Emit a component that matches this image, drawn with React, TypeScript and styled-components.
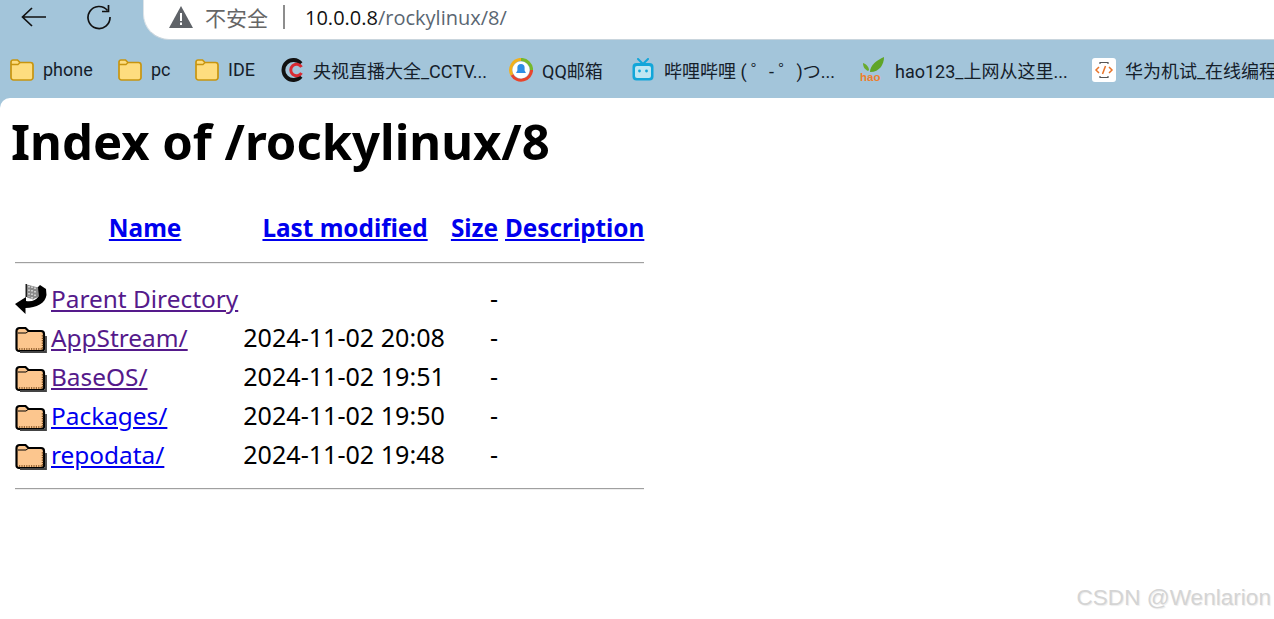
import React from 'react';
import styled, { createGlobalStyle } from 'styled-components';

const GlobalStyle = createGlobalStyle`
  html, body {
    margin: 0;
    padding: 0;
    background: #a3c5da;
    overflow: hidden;
  }
`;

const FolderYellow = () => (
  <svg width="24" height="22" viewBox="0 0 24 22">
    <path d="M1 5V3a2 2 0 0 1 2-2h4.500l2.500 2.500h10.500A2.500 2.500 0 0 1 23 6v12.500a2.500 2.500 0 0 1-2.500 2.500h-17A2.500 2.500 0 0 1 1 18.500z" fill="#fedd7f" stroke="#c8950f" strokeWidth="1.700" />
    <path d="M1 5.500h7l2-2" fill="none" stroke="#c8950f" strokeWidth="1.300" />
  </svg>
);

const CctvIcon = () => (
  <svg width="24" height="24" viewBox="0 0 24 24" fill="none">
    <path d="M21 5.500A10 10 0 1 0 21 18.500" stroke="#111" strokeWidth="3.800" />
    <path d="M21.500 9A5.800 5.800 0 1 0 21.500 15" stroke="#d92a32" strokeWidth="3" />
  </svg>
);

const QQMailIcon = () => (
  <svg width="24" height="24" viewBox="0 0 24 24">
    <path d="M3 17A10.500 10.500 0 0 1 12 1.500" fill="none" stroke="#f2b01e" strokeWidth="3.200" />
    <path d="M12 1.500A10.500 10.500 0 0 1 22.500 12" fill="none" stroke="#76b82a" strokeWidth="3.200" />
    <path d="M22.500 12A10.500 10.500 0 0 1 3 17" fill="none" stroke="#e8452c" strokeWidth="3.200" />
    <circle cx="12" cy="12" r="8.500" fill="#fff" />
    <path d="M12 6a3.600 3.600 0 0 1 3.600 3.600v3l1.400 2.400H7l1.400-2.400v-3A3.600 3.600 0 0 1 12 6z" fill="#2f8fe6" />
  </svg>
);

const BilibiliIcon = () => (
  <svg width="24" height="24" viewBox="0 0 24 24">
    <path d="M7 1l4 4M17 1l-4 4" stroke="#12a6d9" strokeWidth="2" strokeLinecap="round" />
    <rect x="1.500" y="5" width="21" height="17.500" rx="4" fill="#12a6d9" />
    <rect x="4" y="8" width="16" height="12" rx="2" fill="#bfe6f2" />
    <circle cx="8.500" cy="13" r="1.400" fill="#12a6d9" />
    <circle cx="15.500" cy="13" r="1.400" fill="#12a6d9" />
  </svg>
);

const HaoIcon = () => (
  <svg width="26" height="26" viewBox="0 0 26 26">
    <path d="M8 14C4 12 3 9 3 6c3 1 6 4 6 7z" fill="#6aab2e" />
    <path d="M10 15C10 8 17 3 24 0c0 7-4 15-14 15z" fill="#5fa527" />
    <text x="0" y="24" fontFamily="'Liberation Sans', sans-serif" fontSize="11.500" fontWeight="700" fill="#ee7f2d">hao</text>
  </svg>
);

const HuaweiIcon = () => (
  <svg width="24" height="24" viewBox="0 0 24 24">
    <rect width="24" height="24" rx="3" fill="#fff" />
    <path d="M8 6V4.500h8V6M8 18v1.500h8V18" fill="none" stroke="#555" strokeWidth="1.200" />
    <path d="M7 9l-3 3 3 3M17 9l3 3-3 3" fill="none" stroke="#e8742a" strokeWidth="1.500" />
    <path d="M13.500 8l-3 8" stroke="#e8742a" strokeWidth="1.500" />
  </svg>
);

const ParentIcon = () => (
  <svg width="32" height="32" viewBox="0 0 32 32">
    <path d="M0 21L11 14v4c6 1 10-1 12-4l-1-9 3-3 6 4 .5 6c-1 8-10 13-21 13v6z" fill="#000" />
    <path d="M12 1.500l11 3 1 9-6 3-6-2z" fill="#8a8a8a" />
    <path d="M14 3v11M17 3.500v12M20 4.500v11" stroke="#f2f2f2" strokeWidth="1.300" strokeDasharray="1.500 2" />
    <path d="M12 1h-1.500v13H12z" fill="#222" />
  </svg>
);

const ApacheFolder = () => (
  <svg width="32" height="32" viewBox="0 0 32 32">
    <path d="M1.500 9a3 3 0 0 1 3-3h6l3 3h12.500a3 3 0 0 1 3 3v14.500a2.500 2.500 0 0 1-2.500 2.500H4a2.500 2.500 0 0 1-2.500-2.500z" fill="#fcc68e" stroke="#000" strokeWidth="2.200" />
    <path d="M3 11h8l2-1.500" fill="none" stroke="#000" strokeWidth="1" />
    <path d="M4 27h23.500V12" fill="none" stroke="#7a4a1a" strokeWidth="1.500" strokeDasharray="1.200 1.200" />
    <path d="M31 14v16H5" fill="none" stroke="#444" strokeWidth="1.800" />
  </svg>
);

const bookmarks = [
  { label: 'phone', icon: <FolderYellow />, width: 108 },
  { label: 'pc', icon: <FolderYellow />, width: 77 },
  { label: 'IDE', icon: <FolderYellow />, width: 85 },
  { label: '央视直播大全_CCTV...', icon: <CctvIcon />, width: 229 },
  { label: 'QQ邮箱', icon: <QQMailIcon />, width: 122 },
  { label: '哔哩哔哩 ( ゜- ゜)つ...', icon: <BilibiliIcon />, width: 229 },
  { label: 'hao123_上网从这里...', icon: <HaoIcon />, width: 232 },
  { label: '华为机试_在线编程', icon: <HuaweiIcon />, width: 200 },
];

const rows = [
  { name: 'Parent Directory', modified: '', parent: true, visited: true },
  { name: 'AppStream/', modified: '2024-11-02 20:08', visited: true },
  { name: 'BaseOS/', modified: '2024-11-02 19:51', visited: true },
  { name: 'Packages/', modified: '2024-11-02 19:50', visited: false },
  { name: 'repodata/', modified: '2024-11-02 19:48', visited: false },
];

export default function App() {
  return (
    <Page>
      <GlobalStyle />
      <Toolbar>
        <NavButton>
          <svg width="28" height="24" viewBox="0 0 28 24" fill="none" stroke="#111" strokeWidth="1.700">
            <path d="M2 12h24M12 3l-9.500 9 9.500 9" />
          </svg>
        </NavButton>
        <NavButton>
          <svg width="26" height="26" viewBox="0 0 26 26" fill="none" stroke="#111" strokeWidth="1.700">
            <path d="M21.500 6.500A11 11 0 1 0 24 13" />
            <path d="M22.500 1v6.500H16" />
          </svg>
        </NavButton>
        <Omnibox>
          <svg width="24" height="22" viewBox="0 0 24 22">
            <path d="M12 0L24 22H0z" fill="#5f6368" />
            <rect x="11" y="7" width="2" height="8" fill="#fff" />
            <rect x="11" y="16.500" width="2" height="2.500" fill="#fff" />
          </svg>
          <Insecure>不安全</Insecure>
          <Divider />
          <Url>
            <strong>10.0.0.8</strong>/rockylinux/8/
          </Url>
        </Omnibox>
      </Toolbar>
      <BookmarkBar>
        {bookmarks.map((b) => (
          <Bookmark key={b.label} $width={b.width}>
            <BookmarkIcon>{b.icon}</BookmarkIcon>
            <span>{b.label}</span>
          </Bookmark>
        ))}
      </BookmarkBar>
      <Content>
        <Title>Index of /rockylinux/8</Title>
        <Listing>
          <thead>
            <tr>
              <th />
              <th><a href="#n">Name</a></th>
              <th><a href="#m">Last modified</a></th>
              <th><a href="#s">Size</a></th>
              <DescriptionHead><a href="#d">Description</a></DescriptionHead>
            </tr>
            <tr>
              <th colSpan={5}><Rule /></th>
            </tr>
          </thead>
          <tbody>
            {rows.map((r) => (
              <tr key={r.name}>
                <IconCell>{r.parent ? <ParentIcon /> : <ApacheFolder />}</IconCell>
                <NameCell><FileLink href="#f" $visited={r.visited}>{r.name}</FileLink></NameCell>
                <DateCell>{r.modified}</DateCell>
                <SizeCell>-</SizeCell>
                <td />
              </tr>
            ))}
            <tr>
              <th colSpan={5}><Rule /></th>
            </tr>
          </tbody>
        </Listing>
        <Watermark>CSDN @Wenlarion</Watermark>
      </Content>
    </Page>
  );
}

const Page = styled.div`
  width: 1274px;
  height: 619px;
  display: flex;
  flex-direction: column;
  overflow: hidden;
  font-family: 'Noto Sans', 'Noto Sans CJK SC', sans-serif;
`;

const Toolbar = styled.div`
  height: 41px;
  flex: none;
  display: flex;
  align-items: flex-start;
  padding-left: 20px;
`;

const NavButton = styled.div`
  width: 66px;
  height: 34px;
  display: flex;
  align-items: center;
`;

const Omnibox = styled.div`
  margin-left: -9px;
  flex: 1;
  height: 40px;
  background: #fff;
  border-radius: 0 0 0 26px;
  border-left: 1px solid #dce3e8;
  border-bottom: 1px solid #c9d5dd;
  box-sizing: border-box;
  display: flex;
  align-items: center;
  padding: 0 0 5px 25px;
`;

const Insecure = styled.span`
  margin-left: 12px;
  font-size: 21px;
  color: #666;
`;

const Divider = styled.span`
  width: 2px;
  height: 24px;
  margin: 0 20px 0 15px;
  background: #8d8d8d;
`;

const Url = styled.span`
  font-size: 20px;
  color: #5a6672;
  font-family: 'Open Sans', 'Noto Sans', sans-serif;

  strong {
    font-weight: 400;
    color: #111;
  }
`;

const BookmarkBar = styled.div`
  height: 57px;
  flex: none;
  display: flex;
  align-items: center;
  padding: 0 0 0 10px;
  box-sizing: border-box;
  white-space: nowrap;
`;

const Bookmark = styled.div<{ $width: number }>`
  flex: none;
  width: ${(p) => p.$width}px;
  display: flex;
  align-items: center;
  gap: 9px;
  font-family: Roboto, 'Noto Sans CJK SC', sans-serif;
  font-size: 18px;
  color: #15202a;
`;

const BookmarkIcon = styled.span`
  display: flex;
  align-items: center;
`;

const Content = styled.div`
  position: relative;
  flex: 1;
  background: #fff;
  border-radius: 10px 0 0 0;
  padding: 9px 12px 0;
  color: #000;
`;

const Title = styled.h1`
  margin: 0 0 31px -1px;
  font-size: 49px;
  line-height: 68px;
  font-weight: 700;
`;

const Listing = styled.table`
  border-spacing: 2px;
  font-size: 25px;
  line-height: 37px;

  th {
    padding: 1px;
    font-size: 24.3px;
    font-weight: 700;
  }

  td {
    padding: 0 1px;
    height: 37px;
  }

  a {
    color: #0000ee;
  }
`;

const DescriptionHead = styled.th`
  && {
    padding-left: 4px;
  }
`;

const IconCell = styled.td`
  vertical-align: middle;
  line-height: 0;
`;

const NameCell = styled.td`
  && {
    padding-right: 2px;
  }
`;

const DateCell = styled.td`
  font-size: 25.1px;

  && {
    padding-right: 3px;
  }
`;

const SizeCell = styled.td`
  text-align: right;
`;

const FileLink = styled.a<{ $visited: boolean }>`
  font-size: 24.4px;

  && {
    color: ${(p) => (p.$visited ? '#551a8b' : '#0000ee')};
  }
`;

const Rule = styled.hr`
  margin: 12px 0 13px;
  border: none;
  border-top: 1px solid #a0a0a0;
  border-bottom: 1px solid #eee;
`;

const Watermark = styled.div`
  position: absolute;
  right: 3px;
  bottom: 7px;
  font-size: 22.6px;
  line-height: 28px;
  font-family: 'Liberation Sans', sans-serif;
  color: #d4d4d4;
  text-shadow: 1px 1px 1px rgba(0, 0, 0, 0.08);
`;
